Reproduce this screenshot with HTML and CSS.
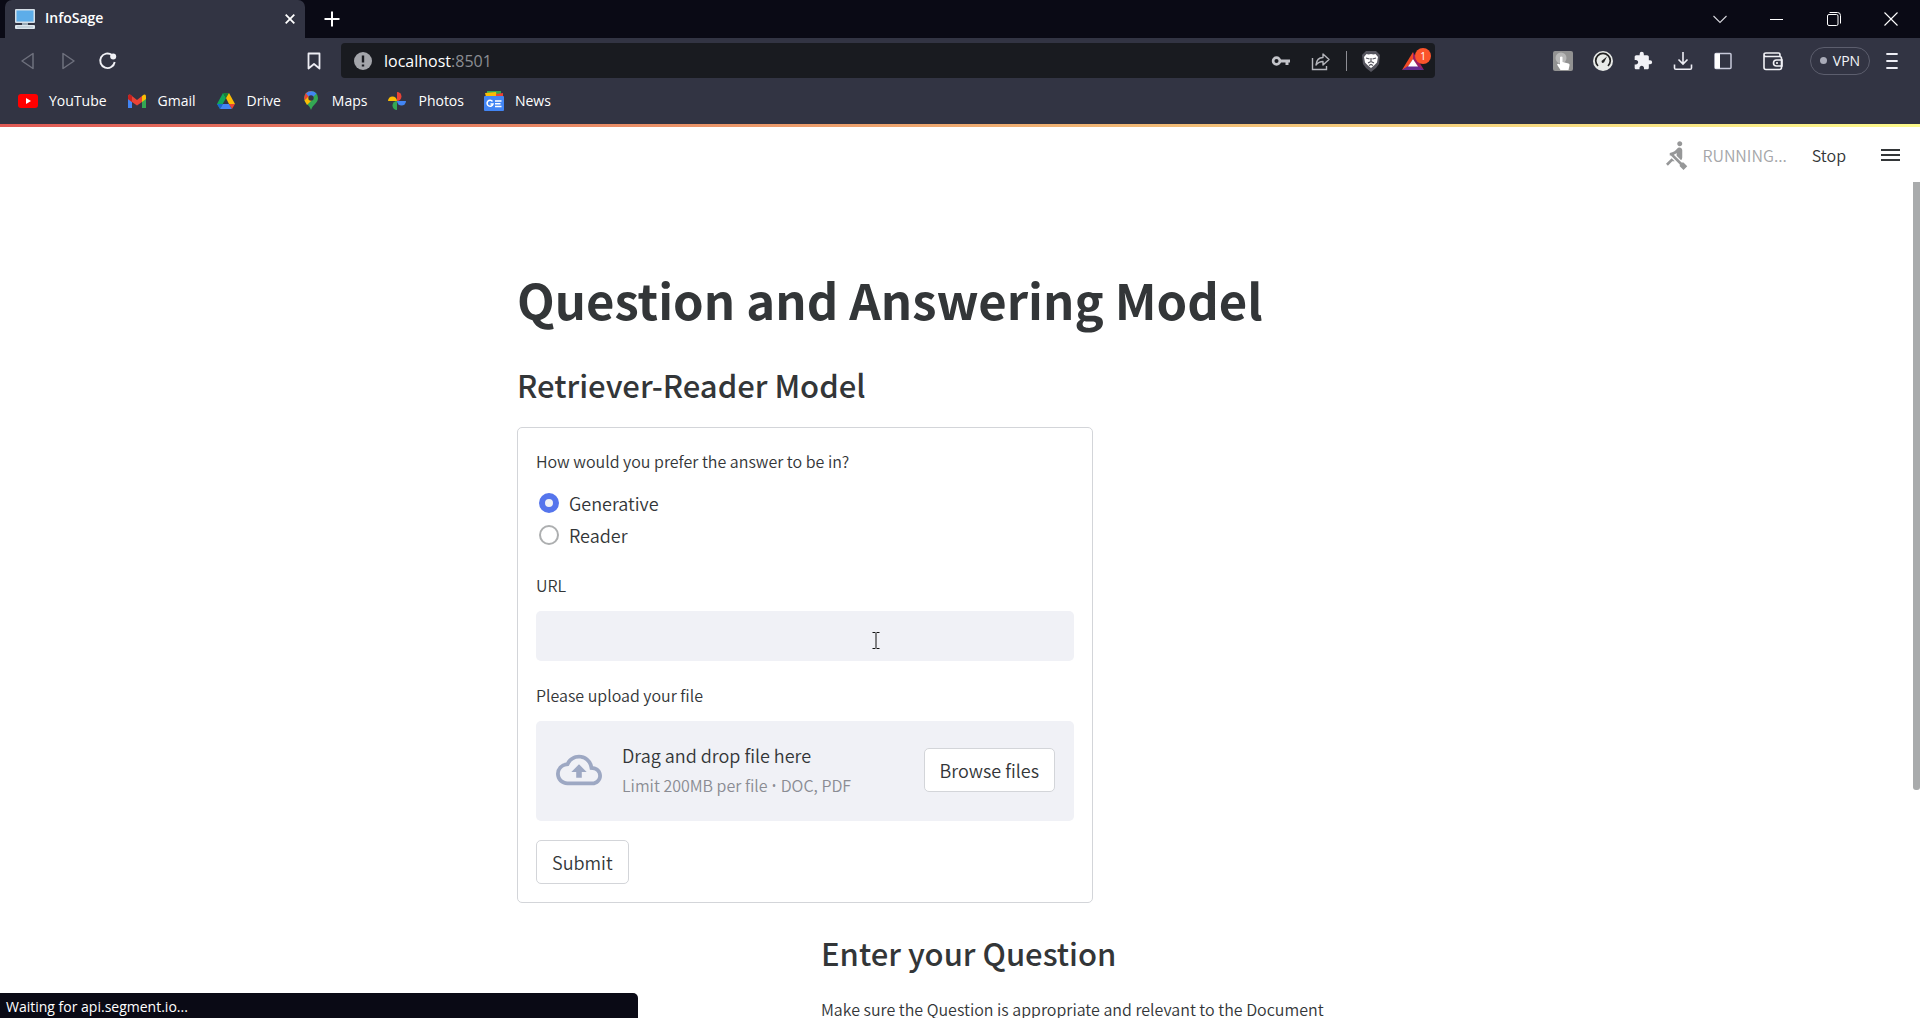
FILE: index.html
```html
<!DOCTYPE html>
<html lang="en">
<head>
<meta charset="utf-8">
<title>InfoSage</title>
<link rel="stylesheet" href="styles.css">
</head>
<body>
<div class="window">
  <div class="tabstrip">
    <div class="tab">
      <svg class="icon20" viewBox="0 0 20 20"><rect x="0" y="0" width="20" height="14" rx="1" fill="#d5dee6"/><rect x="1.5" y="1.5" width="17" height="11" fill="#5dade9"/><rect x="7" y="14" width="6" height="3" fill="#9aabb8"/><rect x="0" y="16" width="20" height="4" rx="1" fill="#dde6ed"/><path d="M2 18h16" stroke="#a9bac7"/></svg>
      <span class="tab-title">InfoSage</span>
      <button class="bare" aria-label="Close tab"><svg width="10" height="10" viewBox="0 0 10 10"><path d="M.7.7l8.6 8.6M9.3.7L.7 9.3" stroke="#fff" stroke-width="1.8"/></svg></button>
    </div>
    <button class="bare new-tab" aria-label="New tab"><svg width="16" height="16" viewBox="0 0 16 16"><path d="M8 .5v15M.5 8h15" stroke="#fff" stroke-width="2"/></svg></button>
    <div class="window-controls">
      <button class="bare" aria-label="Search tabs"><svg width="14" height="14" viewBox="0 0 14 14"><path d="M.5 4L7 10.500 13.500 4" fill="none" stroke="#d6d6dc" stroke-width="1.100"/></svg></button>
      <button class="bare" aria-label="Minimize"><svg width="14" height="14" viewBox="0 0 14 14"><path d="M0 7.500h13" stroke="#fff"/></svg></button>
      <button class="bare" aria-label="Restore"><svg width="14" height="14" viewBox="0 0 14 14"><g fill="none" stroke="#fff"><rect x=".5" y="2.500" width="10.500" height="11" rx="1.500"/><path d="M2.500.500h8a3 3 0 0 1 3 3v8"/></g></svg></button>
      <button class="bare" aria-label="Close"><svg width="14" height="14" viewBox="0 0 14 14"><path d="M.5.5l13 13M13.500.5l-13 13" stroke="#fff" stroke-width="1.100"/></svg></button>
    </div>
  </div>

  <div class="toolbar">
    <div class="nav">
      <button class="bare" aria-label="Back"><svg class="icon20" viewBox="0 0 20 20"><path d="M16 2.500v15L5 10z" fill="none" stroke="#6e707d" stroke-width="1.500" stroke-linejoin="round"/></svg></button>
      <button class="bare" aria-label="Forward"><svg class="icon20" viewBox="0 0 20 20"><path d="M6 2.500v15L17 10z" fill="none" stroke="#6e707d" stroke-width="1.500" stroke-linejoin="round"/></svg></button>
      <button class="bare" aria-label="Reload"><svg class="icon20" viewBox="0 0 20 20"><path d="M15 4A7.300 7.300 0 1 0 17.700 11" fill="none" stroke="#f1f1f6" stroke-width="1.900"/><circle cx="16.200" cy="5.500" r="3" fill="#f1f1f6"/></svg></button>
      <button class="bare bookmark" aria-label="Bookmark this page"><svg class="icon20" viewBox="0 0 20 20"><path d="M4.500 2.500h11v15L10 13l-5.500 4.500z" fill="none" stroke="#eeeef5" stroke-width="1.800" stroke-linejoin="round"/></svg></button>
    </div>
    <div class="omnibox">
      <svg class="icon20" viewBox="0 0 20 20"><circle cx="10" cy="10" r="9" fill="#a3a5aa"/><path d="M10 4.500v7M10 13.500v2" stroke="#191b20" stroke-width="2.400"/></svg>
      <span class="address">localhost<span class="port">:8501</span></span>
      <div class="omni-actions">
        <button class="bare" aria-label="Passwords"><svg class="icon20" viewBox="0 0 20 20"><circle cx="5.500" cy="10" r="3.400" fill="none" stroke="#c3c4c9" stroke-width="2.700"/><path d="M9 10h10M16 10v4" stroke="#c3c4c9" stroke-width="3"/></svg></button>
        <button class="bare" aria-label="Share"><svg class="icon20" viewBox="0 0 20 20"><g fill="none" stroke="#b4b5bb" stroke-width="1.400"><path d="M1.500 7v11.500h14V15"/><path d="M5 14c.5-5 3-7.500 7-7.500V3l6 5.500-6 5.500v-3.500c-3 0-5 1-7 3.500z" stroke-linejoin="round"/></g></svg></button>
        <span class="divider"></span>
        <button class="bare" aria-label="Shields"><svg width="20" height="22" viewBox="0 0 20 22"><path d="M5 1h10l4 4-1 9-3 4-5 4-5-4-3-4L1 5z" fill="#56565f"/><path d="M5.500 4l2 .500L10 4l2.500.500 2-.500 2.500 3-1 5.500-3 3L10 18l-3-2.500-3-3L3 7z" fill="#fff"/><path d="M5 8l3.500 1M15 8l-3.500 1M10 8v4M7 13l3-1.500L13 13M8 15.500l2-1 2 1" stroke="#56565f" stroke-width="1.200" fill="none"/></svg></button>
        <button class="bare rewards" aria-label="Rewards"><svg width="24" height="20" viewBox="0 0 24 20"><path d="M12 1v7l-5 8-6 3z" fill="#f24a25"/><path d="M12 1l11 18-6-3-5-8z" fill="#9e1f63"/><path d="M1 19h22l-6-4H7z" fill="#662d91"/><path d="M12 8l-5 7.500h10z" fill="#fff"/></svg><span class="badge">1</span></button>
      </div>
    </div>
    <div class="extensions">
      <button class="bare" aria-label="Click extension"><svg class="icon20" viewBox="0 0 20 20"><rect width="20" height="20" rx="2" fill="#929292"/><circle cx="8" cy="7" r="5.500" fill="#b8b8b8"/><path d="M7 6q1.300-1 2.500 0v5l6 1.500q1.500.5 1 2L15.500 19h-8L4 13.500q1-1.500 3 0z" fill="#fff"/></svg></button>
      <button class="bare" aria-label="Speed extension"><svg class="icon20" viewBox="0 0 20 20"><circle cx="10" cy="10" r="10" fill="#e8eae8"/><path d="M5 15a7.300 7.300 0 1 1 10 0" fill="none" stroke="#222" stroke-width="1.700"/><path d="M14 5.500l-3 6-2 .5-.5-2z" fill="#222"/></svg></button>
      <button class="bare" aria-label="Extensions"><svg class="icon20" viewBox="0 0 24 24"><path d="M20.500 11H19V7c0-1.100-.9-2-2-2h-4V3.500a2.500 2.500 0 0 0-5 0V5H4c-1.100 0-1.990.9-1.990 2v3.800H3.500c1.490 0 2.700 1.210 2.700 2.700s-1.210 2.700-2.700 2.700H2V20c0 1.100.9 2 2 2h3.800v-1.500c0-1.490 1.210-2.700 2.700-2.700s2.700 1.210 2.700 2.700V22H17c1.100 0 2-.9 2-2v-4h1.500a2.500 2.500 0 0 0 0-5z" fill="#f1f1f6"/></svg></button>
      <button class="bare" aria-label="Downloads"><svg class="icon20" viewBox="0 0 20 20"><path d="M10 1v12M5.500 8.500L10 13l4.500-4.500M1.500 13.500V17q0 1.300 1.300 1.300h14.400q1.300 0 1.300-1.300v-3.500" fill="none" stroke="#eeeef5" stroke-width="1.600"/></svg></button>
      <button class="bare sidebar-btn" aria-label="Sidebar"><svg class="icon20" viewBox="0 0 20 20"><rect x="2" y="2.500" width="16" height="15" rx="1" fill="none" stroke="#c8c9da" stroke-width="1.500"/><path d="M2 2.500h5v15H2z" fill="#fff"/></svg></button>
      <button class="bare" aria-label="Wallet"><svg class="icon20" viewBox="0 0 20 20"><g fill="none" stroke="#f1f1f6" stroke-width="1.600"><path d="M1 4v12.500Q1 18.500 3 18.500h13.500q2 0 2-2V7.500q0-2-2-2H3Q1 5.500 1 3.500 1 2 3 2h12.500q1.500 0 1.500 2v1"/><path d="M19 9h-5.500a3 3 0 0 0 0 6H19z"/></g><circle cx="14" cy="12" r="1" fill="#fff"/></svg></button>
      <button class="vpn"><span class="dot"></span>VPN</button>
      <button class="bare" aria-label="Menu"><svg width="12" height="18" viewBox="0 0 12 18"><path d="M1 2h10M1 9h10M1 16h10" stroke="#eeeef5" stroke-width="1.800" stroke-linecap="round"/></svg></button>
    </div>
  </div>

  <nav class="bookmarks">
    <a href="#youtube"><svg class="icon20" viewBox="0 0 20 20"><rect x="0" y="3" width="20" height="14" rx="3" fill="#f00"/><path d="M8 7v6l5-3z" fill="#fff"/></svg>YouTube</a>
    <a href="#gmail"><svg class="icon20" viewBox="0 0 20 20"><path d="M1 5v12h4V9z" fill="#4285f4"/><path d="M19 5v12h-4V9z" fill="#34a853"/><path d="M1 5.500Q1.500 2 5 5l5 4 5-4v6l-5 3.500L5 11 1 8z" fill="#ea4335"/><path d="M1 5.500Q1.500 2.500 4 4.200L5 5v6L1 8z" fill="#c5221f"/><path d="M15 5q4-3 4 .500V8l-4 3z" fill="#fbbc04"/></svg>Gmail</a>
    <a href="#drive"><svg class="icon20" viewBox="0 0 20 20"><path d="M7 2L1 13l3 5 6-11z" fill="#12a85a"/><path d="M7 2h6l-3 5z" fill="#188038"/><path d="M13 2l6 11h-6L10 7z" fill="#fbbc04"/><path d="M1 13h6l-3 5z" fill="#1967d2"/><path d="M7 13h6l3 5H4z" fill="#4285f4"/><path d="M13 13h6l-3 5z" fill="#ea4335"/></svg>Drive</a>
    <a href="#maps"><svg class="icon20" viewBox="0 0 20 20"><path d="M10 0a7 7 0 0 0-7 7c0 5 5 6 7 12 2-6 7-7 7-12a7 7 0 0 0-7-7z" fill="#34a853"/><path d="M4.500 11L12.500 3 10 0a7 7 0 0 0-5.500 2.500L3 7z" fill="#ea4335"/><path d="M5 2.500A7 7 0 0 1 15.500 2.500L10 8z" fill="#4285f4"/><path d="M3.500 9.500L8 5l3 4-5 5z" fill="#fbbc04"/><circle cx="10" cy="7" r="2.700" fill="#323443"/></svg>Maps</a>
    <a href="#photos"><svg class="icon20" viewBox="0 0 20 20"><path d="M10 10V1a4.500 4.500 0 0 1 0 9z" fill="#ea4335"/><path d="M10 10h9a4.500 4.500 0 0 1-9 0z" fill="#4285f4"/><path d="M10 10v9a4.500 4.500 0 0 1 0-9z" fill="#34a853"/><path d="M10 10H1a4.500 4.500 0 0 1 9 0z" fill="#fbbc04"/></svg>Photos</a>
    <a href="#news"><svg class="icon20" viewBox="0 0 20 20"><path d="M3 0h14v5H3z" fill="#34a853"/><path d="M1 2l11-1 1 5H2z" fill="#fbbc04"/><path d="M12 3l7-1v4h-7z" fill="#ea4335"/><rect x="0" y="5" width="20" height="15" rx="1" fill="#4285f4"/><path d="M8.500 10.500a3 3 0 1 0 .5 2.500H6.500M11 10h6.500M11 12.700h5.500M11 15.400h6.500" fill="none" stroke="#fff" stroke-width="1.500"/></svg>News</a>
  </nav>

  <div class="app">
    <div class="decoration"></div>
    <header class="app-header">
      <svg width="30" height="30" viewBox="0 0 24 24" fill="#969798"><path d="M8.500 14.500L4 19l1.500 1.500L9 17h2l-2.500-2.500zM15 1c-1.100 0-2 .9-2 2s.9 2 2 2 2-.9 2-2-.9-2-2-2zm6 20.010L18 24l-2.990-3.010V19.500l-7.100-7.090c-.31.05-.61.07-.91.07v-2.160c1.660.03 3.610-.87 4.670-2.040l1.400-1.550c.19-.21.43-.38.69-.5.29-.14.62-.23.96-.23h.03C15.990 6.010 17 7.020 17 8.260v5.750c0 .84-.35 1.610-.92 2.160l-3.580-3.580v-2.270c-.63.52-1.430 1.020-2.290 1.390L16.500 18H18l3 3.010z"/></svg>
      <span class="status">RUNNING...</span>
      <button class="bare stop">Stop</button>
      <button class="bare" aria-label="Main menu"><svg width="20" height="14" viewBox="0 0 20 14"><path d="M0 2h19M0 7h19M0 12h19" stroke="#333638" stroke-width="2"/></svg></button>
    </header>

    <main class="content">
      <h1>Question and Answering Model</h1>
      <h2>Retriever-Reader Model</h2>
      <div class="columns columns-left">
        <form class="card">
          <fieldset class="field">
            <legend class="label">How would you prefer the answer to be in?</legend>
            <div class="options">
              <label class="option"><input type="radio" name="mode" checked>Generative</label>
              <label class="option"><input type="radio" name="mode">Reader</label>
            </div>
          </fieldset>
          <div class="field">
            <label class="label" for="url">URL</label>
            <div class="input-wrap">
              <input class="text-input" id="url" type="text">
              <svg class="ibeam" width="8" height="17" viewBox="0 0 8 17"><path d="M.5.500h3M4.500.500h3M4 1v15M.5 16.500h3M4.500 16.500h3" stroke="#111" fill="none"/></svg>
            </div>
          </div>
          <div class="field">
            <span class="label">Please upload your file</span>
            <div class="dropzone">
              <svg width="46" height="46" viewBox="0 0 24 24" fill="#9da8c3"><path d="M19.350 10.040A7.490 7.490 0 0012 4C9.110 4 6.600 5.640 5.350 8.040A5.994 5.994 0 000 14c0 3.310 2.690 6 6 6h13c2.760 0 5-2.240 5-5 0-2.640-2.050-4.780-4.650-4.960zM19 18H6c-2.210 0-4-1.790-4-4 0-2.050 1.530-3.760 3.560-3.970l1.070-.11.5-.95A5.469 5.469 0 0112 6c2.620 0 4.880 1.860 5.390 4.430l.3 1.500 1.530.11A2.980 2.980 0 0122 15c0 1.650-1.350 3-3 3zM8 13h2.550v3h2.900v-3H16l-4-4z"/></svg>
              <div class="drop-text">
                <span class="drop-title">Drag and drop file here</span>
                <span class="drop-hint">Limit 200MB per file <span class="bullet">•</span> DOC, PDF</span>
              </div>
              <button class="btn" type="button">Browse files</button>
            </div>
          </div>
          <button class="btn submit" type="button">Submit</button>
        </form>
      </div>
      <div class="columns columns-right">
        <section class="question">
          <h2>Enter your Question</h2>
          <p>Make sure the Question is appropriate and relevant to the Document</p>
        </section>
      </div>
    </main>
    <div class="scroll-thumb"></div>
    <div class="status-bubble">Waiting for api.segment.io...</div>
  </div>
</div>
</body>
</html>
```
FILE: styles.css
```css
* { box-sizing: border-box; }
body { margin: 0; background: #fff; font-family: "Open Sans", sans-serif; }
button, input { font: inherit; color: inherit; margin: 0; }
.window { height: 100vh; display: flex; flex-direction: column; overflow: hidden; }
.bare { border: 0; background: none; padding: 0; display: flex; align-items: center; }
.icon20 { width: 20px; height: 20px; flex: none; display: block; }

/* Browser chrome */
.tabstrip { height: 38px; flex: none; background: #0a0a15; display: flex; align-items: center; padding-left: 5px; }
.tab { width: 300px; height: 38px; background: #323443; border-radius: 7px 7px 0 0; display: flex; align-items: center; gap: 10px; padding: 0 10px; color: #fff; }
.tab-title { flex: 1; font-size: 14px; font-weight: 600; line-height: 18px; padding-bottom: 2px; }
.new-tab { margin-left: 19px; }
.window-controls { margin-left: auto; padding-right: 22px; display: flex; gap: 43px; }
.toolbar { height: 45px; flex: none; background: #323443; display: flex; align-items: center; }
.nav { width: 341px; padding: 0 17px; display: flex; gap: 20px; }
.bookmark { margin-left: auto; }
.omnibox { flex: 1; height: 35px; margin-right: 118px; background: #191b20; border-radius: 4px; display: flex; align-items: center; gap: 11px; padding: 0 10px 0 12px; color: #fff; }
.address { flex: 1; font-size: 16px; }
.port { color: #8b8d92; }
.omni-actions { display: flex; align-items: center; gap: 20px; }
.divider { width: 1px; height: 20px; background: #8d8e94; margin: 0 -6px 0 -5px; }
.rewards { position: relative; }
.badge { position: absolute; left: 14px; top: -3px; width: 16px; height: 16px; border-radius: 50%; background: #fb542b; color: #fff; font-size: 10px; line-height: 16px; text-align: center; }
.extensions { display: flex; align-items: center; gap: 20px; padding-right: 22px; }
.sidebar-btn { margin-right: 10px; }
.vpn { width: 60px; height: 28px; border: 1px solid #5c5e6d; border-radius: 14px; background: none; color: #f4f4f8; padding: 0; display: flex; align-items: center; justify-content: center; gap: 6px; font-size: 14px; margin-left: 7px; margin-right: -4px; }
.dot { width: 7px; height: 7px; border-radius: 50%; background: #a9abb8; }
.bookmarks { height: 41px; flex: none; background: #323443; display: flex; align-items: center; gap: 20px; padding: 0 18px 6px; }
.bookmarks a { display: flex; align-items: center; gap: 11px; color: #fff; text-decoration: none; font-size: 14px; }

/* App page */
.app { flex: 1; min-height: 0; position: relative; overflow: hidden; color: #333638; font-family: "Noto Sans CJK SC", "Noto Sans", sans-serif; font-weight: 350; }
.decoration { height: 3px; background: linear-gradient(90deg, #e05a55, #fdfa8c); }
.app-header { height: 55px; display: flex; align-items: center; justify-content: flex-end; padding-right: 19px; font-size: 16px; }
.status { margin: 0 25px 0 11px; color: #a5a6a9; }
.stop { margin-right: 35px; }
.content { width: 880px; max-width: 100%; margin: 0 auto; padding-top: 84px; position: relative; left: -3px; }
h1, h2, p { margin: 0; }
h1 { font-size: 49px; line-height: 66px; font-weight: 700; margin-bottom: 33px; white-space: nowrap; }
h2 { font-size: 31px; line-height: 40px; font-weight: 500; }
.columns { display: grid; gap: 16px; }
.columns-left { grid-template-columns: 2fr 1fr; margin-top: 22px; }
.columns-right { grid-template-columns: 1fr 2fr; margin-top: 30px; }
.question { grid-column: 2; }
.question p { margin-top: 24px; font-size: 16px; line-height: 24px; }
.card { border: 1px solid #d3d5d9; border-radius: 5px; padding: 18px; display: flex; flex-direction: column; gap: 19px; }
.field { border: 0; margin: 0; padding: 0; min-width: 0; }
.label { display: block; padding: 0; margin-bottom: 11px; font-size: 16px; line-height: 30px; }
.option { display: flex; align-items: center; gap: 10px; padding-left: 3px; height: 32px; font-size: 18px; line-height: 32px; }
.option input { appearance: none; width: 20px; height: 20px; border: 2px solid #adafb0; border-radius: 50%; background: #fff; }
.option input:checked { border: 6px solid #5575ec; background: #f0f2f6; }
.input-wrap { position: relative; height: 50px; }
.text-input { display: block; width: 100%; height: 50px; border: 0; border-radius: 5px; background: #f0f1f6; padding: 0 12px; font-size: 18px; }
.ibeam { position: absolute; left: 336px; top: 21px; }
.dropzone { height: 100px; border-radius: 5px; background: #f0f1f6; display: flex; align-items: center; padding: 0 19px 2px 20px; }
.drop-text { flex: 1; margin-left: 20px; display: flex; flex-direction: column; }
.drop-title { font-size: 18px; line-height: 30px; }
.drop-hint { font-size: 16px; line-height: 30px; color: #8a8c93; }
.bullet { font-family: "Open Sans", sans-serif; }
.btn { height: 44px; border: 1px solid #d3d5d9; border-radius: 5px; background: #fff; padding: 0 15px; font-size: 18px; line-height: 24px; }
.submit { align-self: flex-start; }
.scroll-thumb { position: absolute; right: 0; top: 58px; width: 7px; height: 608px; background: #a9abac; border-radius: 0 0 3px 3px; }
.status-bubble { position: absolute; left: 0; bottom: 0; width: 638px; height: 25px; background: #0a0a15; color: #fff; border-top-right-radius: 5px; padding: 0 6px; font: 14px/27px "Open Sans", sans-serif; }
```
